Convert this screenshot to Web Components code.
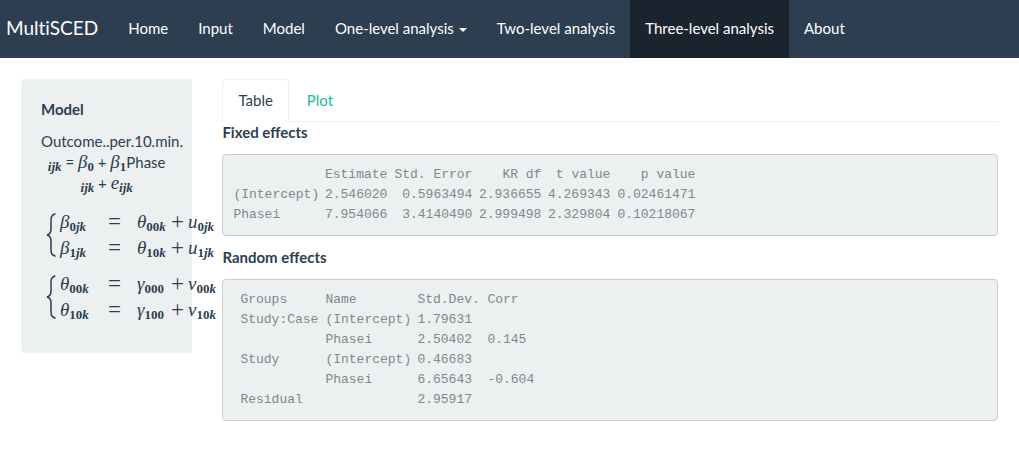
<!DOCTYPE html>
<html lang="en">
<head>
<meta charset="utf-8">
<meta name="viewport" content="width=device-width, initial-scale=1">
<title>MultiSCED</title>
<style>
  body {
    margin: 0;
    background: #fff;
    color: #2c3e50;
    font: 15px/21px Lato, "Liberation Sans", sans-serif;
    --navy: #2c3e50;
    --navy-dark: #1a242f;
    --teal: #18bc9c;
    --mist: #ecf0f1;
  }
</style>
</head>
<body>
<sced-app></sced-app>

<template id="t-app">
  <style>
    :host { display: block; }
    main { display: grid; grid-template-columns: 20% 80%; align-items: start; padding: 21px 6px; }
    main > * { margin: 0 15px; min-width: 0; }
    p { margin: 11px 0 15px; text-align: center; }
    equation-system + equation-system { margin-top: 10px; }
    section h2 { margin: 0 0 11px; font-size: 15px; line-height: 21px; font-weight: 700; }
    section h2 ~ h2 { margin-top: 11px; }
  </style>
  <nav-bar>
    <nav-item>Home</nav-item>
    <nav-item>Input</nav-item>
    <nav-item>Model</nav-item>
    <nav-item menu>One-level analysis</nav-item>
    <nav-item>Two-level analysis</nav-item>
    <nav-item active>Three-level analysis</nav-item>
    <nav-item>About</nav-item>
  </nav-bar>
  <main>
    <side-well heading="Model">
      <p>Outcome..per.10.min.<br><math-term sub="ijk"></math-term> = <math-term base="β" sub="0"></math-term> + <math-term base="β" sub="1"></math-term>Phase<br><math-term sub="ijk"></math-term> + <math-term base="e" sub="ijk"></math-term></p>
      <equation-system rows="β 0jk θ 00k u 0jk; β 1jk θ 10k u 1jk"></equation-system>
      <equation-system rows="θ 00k γ 000 v 00k; θ 10k γ 100 v 10k"></equation-system>
    </side-well>
    <section>
      <tab-strip>
        <tab-link active>Table</tab-link>
        <tab-link>Plot</tab-link>
      </tab-strip>
      <h2>Fixed effects</h2>
      <fixed-effects></fixed-effects>
      <h2>Random effects</h2>
      <random-effects></random-effects>
    </section>
  </main>
</template>

<template id="t-nav-bar">
  <style>
    :host { display: block; background: var(--navy); color: #fff; }
    nav { display: flex; flex-wrap: wrap; align-items: center; padding-left: 6px; }
    .brand { color: inherit; text-decoration: none; font-size: 19px; line-height: 21px; padding: 0 15px 3px 0; font-variant-ligatures: none; }
  </style>
  <nav aria-label="Main"><a class="brand" href="#">MultiSCED</a><slot></slot></nav>
</template>

<template id="t-nav-item">
  <style>
    :host { display: block; }
    :host([active]) { background: var(--navy-dark); }
    a, button {
      display: flex; align-items: center; gap: 5px; padding: 18px 15px 19px;
      border: 0; background: none; color: #fff; font: inherit; text-decoration: none;
      white-space: nowrap; cursor: pointer;
    }
    .caret { border: 4px solid transparent; border-top-color: #fff; border-bottom: 0; margin-top: 2px; }
  </style>
</template>

<template id="t-side-well">
  <style>
    :host { display: block; box-sizing: border-box; background: var(--mist); border-radius: 4px; padding: 20px 20px 30px; }
    h2 { margin: 0; font-size: 15px; line-height: 21px; font-weight: 700; }
  </style>
  <h2></h2><slot></slot>
</template>

<template id="t-math-term">
  <style>
    :host { display: inline; font-family: "Liberation Serif", serif; font-size: 19px; line-height: 0; white-space: nowrap; }
    i { font-style: italic; }
    sub { font-size: 13px; font-weight: 700; line-height: 0; vertical-align: -3px; }
  </style>
</template>

<template id="t-equation-system">
  <style>
    :host { display: grid; grid-template-columns: 10px max-content; gap: 4px; margin-left: 5px; }
    svg { width: 10px; height: 44px; align-self: center; }
    .rows { display: grid; grid-template-columns: 48px 29px 34px 17px auto; line-height: 26px; white-space: nowrap; }
    .op { font-family: "Liberation Serif", serif; font-size: 23px; }
  </style>
  <svg viewBox="0 0 10 44" aria-hidden="true"><path d="M9 1Q5 2 5 7V16Q5 21 1 22Q5 23 5 28V37Q5 42 9 43" fill="none" stroke="#2c3e50" stroke-width="1.5" stroke-linecap="round"/></svg>
  <div class="rows"></div>
</template>

<template id="t-tab-strip">
  <style>
    :host { display: flex; gap: 2px; border-bottom: 1px solid var(--mist); }
  </style>
  <slot></slot>
</template>

<template id="t-tab-link">
  <style>
    :host { display: block; margin-bottom: -1px; }
    a { display: block; padding: 10px 15px; border: 1px solid transparent; border-radius: 4px 4px 0 0; color: var(--teal); text-decoration: none; }
    :host([active]) a { color: var(--navy); background: #fff; border-color: var(--mist); border-bottom-color: #fff; }
  </style>
  <a href="#"><slot></slot></a>
</template>

<template id="t-output">
  <style>
    :host { display: block; box-sizing: border-box; padding: 10px; border: 1px solid #ccc; border-radius: 4px; background: var(--mist); color: #7b8a8b; overflow-x: auto; }
    table { border-collapse: collapse; table-layout: fixed; font: 13px/20px "Liberation Mono", monospace; white-space: nowrap; }
    th, td { padding: 0; font-weight: 400; text-align: left; height: 20px; }
    .numeric td, .numeric thead th { text-align: right; }
    .grouped { margin-left: 7px; }
  </style>
</template>

<script>
  const stamp = (host, id) => {
    const root = host.attachShadow({ mode: "open" });
    root.append(document.getElementById(id).content.cloneNode(true));
    return root;
  };
  const simple = (tag) => customElements.define(tag, class extends HTMLElement {
    constructor() { super(); stamp(this, "t-" + tag); }
  });

  simple("nav-bar");
  simple("tab-strip");
  simple("tab-link");

  customElements.define("nav-item", class extends HTMLElement {
    connectedCallback() {
      if (this.shadowRoot) return;
      const root = stamp(this, "t-nav-item");
      const menu = this.hasAttribute("menu");
      const control = document.createElement(menu ? "button" : "a");
      if (menu) {
        control.type = "button";
        control.setAttribute("aria-haspopup", "true");
      } else {
        control.href = "#";
        if (this.hasAttribute("active")) control.setAttribute("aria-current", "page");
      }
      control.innerHTML = "<slot></slot>" + (menu ? '<span class="caret"></span>' : "");
      root.append(control);
    }
  });

  customElements.define("side-well", class extends HTMLElement {
    connectedCallback() {
      if (this.shadowRoot) return;
      stamp(this, "t-side-well").querySelector("h2").textContent = this.getAttribute("heading");
    }
  });

  // A letter with a subscript; letters are italic, digits upright.
  customElements.define("math-term", class extends HTMLElement {
    connectedCallback() {
      if (this.shadowRoot) return;
      const root = stamp(this, "t-math-term");
      const base = this.getAttribute("base");
      if (base) {
        const i = document.createElement("i");
        i.textContent = base;
        root.append(i);
      }
      const sub = document.createElement("sub");
      sub.innerHTML = this.getAttribute("sub").replace(/[a-z]+/g, "<i>$&</i>");
      root.append(sub);
    }
  });

  // Rows of "lhs sub, term sub, term sub", joined by a left brace.
  customElements.define("equation-system", class extends HTMLElement {
    connectedCallback() {
      if (this.shadowRoot) return;
      const rows = stamp(this, "t-equation-system").querySelector(".rows");
      const term = (base, sub) => `<span><math-term base="${base}" sub="${sub}"></math-term></span>`;
      rows.innerHTML = this.getAttribute("rows").split(";").map((row) => {
        const p = row.trim().split(" ");
        return term(p[0], p[1]) + '<span class="op">=</span>' + term(p[2], p[3]) + '<span class="op">+</span>' + term(p[4], p[5]);
      }).join("");
    }
  });

  const defineOutput = (tag, kind, widths, head, body) => customElements.define(tag, class extends HTMLElement {
    connectedCallback() {
      if (this.shadowRoot) return;
      const root = stamp(this, "t-output");
      const table = document.createElement("table");
      table.className = kind;
      table.style.width = widths.reduce((a, b) => a + b) + "px";
      table.innerHTML =
        "<colgroup>" + widths.map((w) => `<col style="width:${w}px">`).join("") + "</colgroup>" +
        "<thead><tr>" + head.map((h) => h ? `<th scope="col">${h}</th>` : "<td></td>").join("") + "</tr></thead><tbody>" +
        body.map((r) => "<tr>" + r.map((c, i) => i ? `<td>${c}</td>` : `<th scope="row">${c}</th>`).join("") + "</tr>").join("") +
        "</tbody>";
      root.append(table);
    }
  });

  defineOutput("fixed-effects", "numeric", [90, 64, 85, 69, 69, 85],
    ["", "Estimate", "Std. Error", "KR df", "t value", "p value"],
    [["(Intercept)", "2.546020", "0.5963494", "2.936655", "4.269343", "0.02461471"],
     ["Phasei", "7.954066", "3.4140490", "2.999498", "2.329804", "0.10218067"]]);

  defineOutput("random-effects", "grouped", [85, 92, 70, 54],
    ["Groups", "Name", "Std.Dev.", "Corr"],
    [["Study:Case", "(Intercept)", "1.79631", ""],
     ["", "Phasei", "2.50402", "0.145"],
     ["Study", "(Intercept)", "0.46683", ""],
     ["", "Phasei", "6.65643", "-0.604"],
     ["Residual", "", "2.95917", ""]]);

  customElements.define("sced-app", class extends HTMLElement {
    constructor() { super(); stamp(this, "t-app"); }
  });
</script>
</body>
</html>
